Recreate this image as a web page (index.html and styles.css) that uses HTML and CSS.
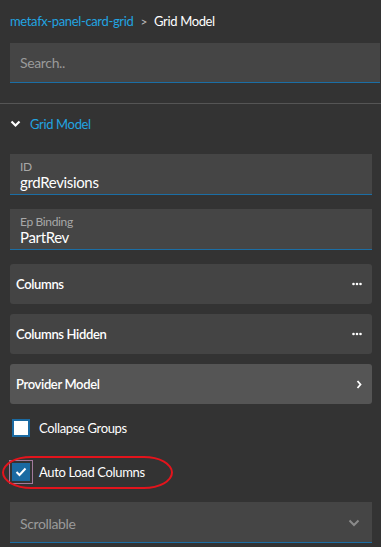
FILE: index.html
```html
<!DOCTYPE html>
<html lang="en">
<head>
  <meta charset="UTF-8" />
  <meta name="viewport" content="width=device-width, initial-scale=1.0" />
  <title>Grid Model</title>
  <link rel="stylesheet" href="styles.css">
</head>
<body>
  <div class="panel">
    <div class="crumbs">
      <span class="crumb-link">metafx-panel-card-grid</span>
      <span class="crumb-sep">&gt;</span>
      <span class="crumb-current">Grid Model</span>
    </div>

    <div class="search">Search..</div>

    <div class="divider"></div>

    <div class="section-head">
      <svg class="chev" width="11" height="8" viewBox="0 0 11 8"><path d="M1.5 1.5 L5.5 5.5 L9.5 1.5" fill="none" stroke="#fff" stroke-width="2.2"/></svg>
      <span>Grid Model</span>
    </div>

    <div class="fields">
      <div class="field">
        <div class="field-label">ID</div>
        <div class="field-value">grdRevisions</div>
      </div>
      <div class="field">
        <div class="field-label">Ep Binding</div>
        <div class="field-value">PartRev</div>
      </div>

      <div class="btn">
        <span>Columns</span>
        <svg width="10" height="4" viewBox="0 0 10 4"><circle cx="1.5" cy="2" r="1.3" fill="#fff"/><circle cx="5" cy="2" r="1.3" fill="#fff"/><circle cx="8.5" cy="2" r="1.3" fill="#fff"/></svg>
      </div>
      <div class="btn">
        <span>Columns Hidden</span>
        <svg width="10" height="4" viewBox="0 0 10 4"><circle cx="1.5" cy="2" r="1.3" fill="#fff"/><circle cx="5" cy="2" r="1.3" fill="#fff"/><circle cx="8.5" cy="2" r="1.3" fill="#fff"/></svg>
      </div>
      <div class="btn btn-hover">
        <span>Provider Model</span>
        <svg width="6" height="9" viewBox="0 0 6 9"><path d="M1.5 1 L4.5 4.5 L1.5 8" fill="none" stroke="#fff" stroke-width="1.8"/></svg>
      </div>
    </div>

    <div class="checks">
      <label class="check">
        <span class="box"></span>
        <span>Collapse Groups</span>
      </label>
      <label class="check">
        <span class="box box-on focus">
          <svg width="12" height="10" viewBox="0 0 12 10"><path d="M1.5 5 L4.5 8 L10.5 1.5" fill="none" stroke="#fff" stroke-width="2"/></svg>
        </span>
        <span>Auto Load Columns</span>
      </label>
    </div>

    <div class="select">
      <span>Scrollable</span>
      <svg width="12" height="8" viewBox="0 0 12 8"><path d="M1.5 1.5 L6 6 L10.5 1.5" fill="none" stroke="#8a8a8a" stroke-width="2"/></svg>
    </div>

    <!-- annotation -->
    <div class="mark"></div>
  </div>
</body>
</html>
```

FILE: styles.css
```css
body {
  margin: 0;
  background: #fff;
  font-family: 'Lato', 'Liberation Sans', sans-serif;
  letter-spacing: -0.35px;
}
.panel {
  position: relative;
  width: 381px;
  height: 547px;
  background: #333;
  color: #fff;
  overflow: hidden;
}
.crumbs {
  height: 43px;
  padding-left: 10px;
  display: flex;
  align-items: center;
  gap: 7px;
  font-size: 13px;
  box-sizing: border-box;
  padding-bottom: 1px;
}
.crumb-link {
  color: #22a4e0;
}
.crumb-sep {
  color: #bbb;
  font-size: 12px;
}
.crumb-current {
  color: #fff;
}
.search {
  margin-left: 10px;
  width: 370px;
  height: 40px;
  box-sizing: border-box;
  background: #454545;
  border-bottom: 1px solid #1b6ea5;
  padding-left: 10px;
  display: flex;
  align-items: center;
  color: #9a9a9a;
  font-size: 14px;
}
.divider {
  margin-top: 20px;
  height: 1px;
  background: #555;
}
.section-head {
  height: 40px;
  display: flex;
  align-items: center;
  padding-left: 10px;
  gap: 9px;
  color: #22a4e0;
  font-size: 13px;
}
.fields {
  padding: 10px 9px 0 10px;
  display: flex;
  flex-direction: column;
  gap: 10px;
}
.field {
  height: 41px;
  box-sizing: border-box;
  background: #454545;
  border-bottom: 1px solid #1b6ea5;
  padding: 5px 10px 0 10px;
  margin-bottom: 4px;
}
.field-label {
  font-size: 12px;
  color: #a8a8a8;
  line-height: 15px;
}
.field-value {
  font-size: 15px;
  color: #fff;
  line-height: 17px;
}
.btn {
  height: 40px;
  background: #444;
  border-radius: 3px;
  display: flex;
  align-items: center;
  justify-content: space-between;
  padding: 0 10px 0 6px;
  font-size: 13px;
  font-weight: 600;
}
.btn-hover {
  background: #555;
}
.checks {
  margin-top: 2px;
  padding-left: 12px;
}
.check {
  height: 44px;
  display: flex;
  align-items: center;
  gap: 9px;
  font-size: 13px;
}
.box {
  width: 18px;
  height: 18px;
  box-sizing: border-box;
  border: 2px solid #1a6aa2;
  background: #fff;
  display: flex;
  align-items: center;
  justify-content: center;
}
.box-on {
  background: #1a6aa2;
}
.focus {
  outline: 1px solid #a27a9c;
  outline-offset: 2px;
}
.select {
  margin: 8px 9px 0 10px;
  height: 41px;
  box-sizing: border-box;
  background: #454545;
  border-bottom: 1px solid #1b6ea5;
  display: flex;
  align-items: center;
  justify-content: space-between;
  padding: 2px 12px 0 10px;
  color: #9a9a9a;
  font-size: 14px;
}
.mark {
  position: absolute;
  left: 2px;
  top: 456px;
  width: 171px;
  height: 33px;
  box-sizing: border-box;
  border: 2px solid #e3141c;
  border-radius: 30px / 17px;
}
```
